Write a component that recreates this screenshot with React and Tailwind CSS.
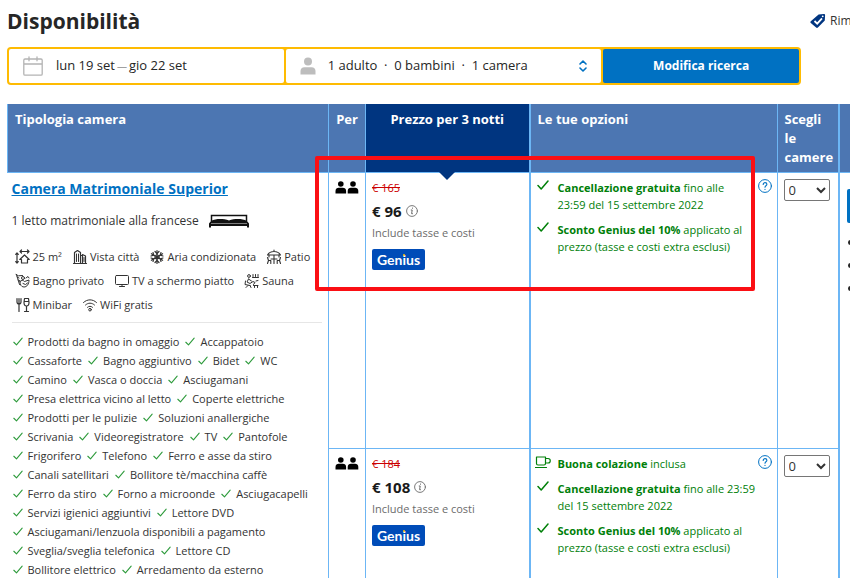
import { Fragment } from "react";

const highlights = [
  [
    { icon: SizeIcon, label: "25 m²" },
    { icon: CityIcon, label: "Vista città" },
    { icon: SnowIcon, label: "Aria condizionata" },
    { icon: PatioIcon, label: "Patio" },
  ],
  [
    { icon: ShowerIcon, label: "Bagno privato" },
    { icon: TvIcon, label: "TV a schermo piatto" },
    { icon: SaunaIcon, label: "Sauna" },
  ],
  [
    { icon: MinibarIcon, label: "Minibar" },
    { icon: WifiIcon, label: "WiFi gratis" },
  ],
];

const facilities = [
  ["Prodotti da bagno in omaggio", "Accappatoio"],
  ["Cassaforte", "Bagno aggiuntivo", "Bidet", "WC"],
  ["Camino", "Vasca o doccia", "Asciugamani"],
  ["Presa elettrica vicino al letto", "Coperte elettriche"],
  ["Prodotti per le pulizie", "Soluzioni anallergiche"],
  ["Scrivania", "Videoregistratore", "TV", "Pantofole"],
  ["Frigorifero", "Telefono", "Ferro e asse da stiro"],
  ["Canali satellitari", "Bollitore tè/macchina caffè"],
  ["Ferro da stiro", "Forno a microonde", "Asciugacapelli"],
  ["Servizi igienici aggiuntivi", "Lettore DVD"],
  ["Asciugamani/lenzuola disponibili a pagamento"],
  ["Sveglia/sveglia telefonica", "Lettore CD"],
  ["Bollitore elettrico", "Arredamento da esterno"],
];

const genius = { bold: "Sconto Genius del 10%", lines: ["applicato al", "prezzo (tasse e costi extra esclusi)"] };

const offers = [
  {
    id: "offer-1",
    oldPrice: "€ 165",
    price: "€ 96",
    options: [
      { bold: "Cancellazione gratuita", lines: ["fino alle", "23:59 del 15 settembre 2022"] },
      genius,
    ],
  },
  {
    id: "offer-2",
    oldPrice: "€ 184",
    price: "€ 108",
    options: [
      { bold: "Buona colazione", lines: ["inclusa"], breakfast: true },
      { bold: "Cancellazione gratuita", lines: ["fino alle 23:59", "del 15 settembre 2022"] },
      genius,
    ],
  },
];

function Icon({ children, className = "size-4", viewBox = "0 0 16 16" }) {
  return (
    <svg
      viewBox={viewBox}
      className={`shrink-0 ${className}`}
      fill="none"
      stroke="currentColor"
      strokeWidth="1"
      strokeLinecap="round"
      strokeLinejoin="round"
      aria-hidden="true"
    >
      {children}
    </svg>
  );
}

function SizeIcon() {
  return (
    <Icon>
      <path d="M5 2.500h9M6.500 1 5 2.500 6.500 4M12.500 1 14 2.500 12.500 4M2 4v10M.7 5.300 2 4l1.300 1.300M.7 12.700 2 14l1.300-1.300" strokeWidth="1.200" />
      <path d="m4.800 10.500 4.700-4.500 4.700 4.500H12.500V14h-6v-3.500z" strokeWidth="1.200" />
    </Icon>
  );
}

function CityIcon() {
  return (
    <Icon>
      <path d="M2.500 14.500v-11l3-2 3 2v11zM8.500 6.500h2v8M10.500 14.500v-9l3 1.500v7.500zM1.500 14.500h13" strokeWidth="1.200" />
      <path d="M4.500 5v7.500M6.500 5v7.500M12 8.500v4" />
    </Icon>
  );
}

function SnowIcon() {
  return (
    <Icon>
      <path d="M8 1.500v13M2.400 4.700l11.200 6.600M2.400 11.300l11.200-6.600" strokeWidth="1.200" />
      <path d="m6 2.500 2 2 2-2M6 13.500l2-2 2 2M2 7l2.700-.8L4 3.500M14 9l-2.700.8.700 2.700M2 9l2.700.8-.7 2.700M14 7l-2.700-.8.7-2.700" strokeWidth="1.200" />
      <circle cx="8" cy="8" r="2.200" />
    </Icon>
  );
}

function PatioIcon() {
  return (
    <Icon>
      <path d="M8 1v1.500M1.500 6C3 3.500 5.500 2.500 8 2.500S13 3.500 14.500 6zM8 6v8.500M5 10h6" strokeWidth="1.100" />
      <path d="M3 6v2M13 6v2M1.500 8.500l1 3h2.300v3M14.500 8.500l-1 3h-2.300v3M2.500 11.500l-1 3M13.500 11.500l1 3" strokeWidth="1.100" />
    </Icon>
  );
}

function ShowerIcon() {
  return (
    <Icon>
      <path d="M1 1.500l2.500 1.300 4-.3M2 4l2 1M3 7l1.500.5M1.500 1.500l3 10" />
      <circle cx="8" cy="5" r="1.500" />
      <path d="M5 8.500c1.500-1.500 3-1.500 4.500 0l4.500-1.500c0 4-2 7-5 7s-4-2.500-4-5.500zM8 10.500l2.500 1 2-1.500M11 5l2-1.500 1 1.500" />
    </Icon>
  );
}

function TvIcon() {
  return (
    <Icon>
      <path d="M2.500 2.500h11a1 1 0 0 1 1 1v7a1 1 0 0 1-1 1h-11a1 1 0 0 1-1-1v-7a1 1 0 0 1 1-1zM8 11.500v2M5.500 13.500h5" />
    </Icon>
  );
}

function SaunaIcon() {
  return (
    <Icon>
      <circle cx="5" cy="3" r="1.400" />
      <path d="M9 1.500v2M11.500 1.500v2M14 1.500v2M8.500 4.500h6" />
      <path d="M4.500 6 3 9l3 1.500 3-2 2 1-1.500 2M4.500 6l3 2M1.500 8l-.5 3.500 5 1M2 14.500l2-2M6 12.500l1 2M9.500 12.500h4.500M10.500 14.500v-2M13.500 14.500v-2M12 8l2-.5" />
    </Icon>
  );
}

function MinibarIcon() {
  return (
    <Icon>
      <path d="M2 1.500v3.500M4 1.500v13M6 1.500v3.500M2 5c0 1.300.8 2 2 2s2-.7 2-2" strokeWidth="1.200" />
      <path d="M9.500 1.500h4l.5 4c0 2-1 3.500-2.500 3.500S9 7.500 9 5.500zM9.200 4.500h4.600M11.500 9v5M9.500 14.500h4" strokeWidth="1.200" />
    </Icon>
  );
}

function WifiIcon() {
  return (
    <Icon>
      <path d="M1.500 5.500c3.800-3.600 9.200-3.600 13 0M3.500 8c2.700-2.500 6.300-2.500 9 0M5.500 10.300c1.600-1.400 3.400-1.400 5 0" />
      <circle cx="8" cy="12.700" r="1.300" />
    </Icon>
  );
}

function CheckIcon({ className }) {
  return (
    <Icon viewBox="0 0 12 12" className={className}>
      <path d="M1 7.500l3.200 3.200L11 2.500" strokeWidth="1.300" />
    </Icon>
  );
}

function BoldCheckIcon() {
  return (
    <Icon viewBox="0 0 12 12" className="size-3 mx-0.5">
      <path d="M1 6.500l3.200 3.500L11 2" strokeWidth="1.500" />
    </Icon>
  );
}

function CupIcon() {
  return (
    <Icon className="size-4">
      <path d="M1.500 2h9v6.500a1.500 1.500 0 0 1-1.500 1.500H3a1.500 1.500 0 0 1-1.500-1.500zM10.500 3.500h2.500a1.800 1.800 0 0 1 0 4.500h-2.500M.5 12.500h11" strokeWidth="1.200" />
    </Icon>
  );
}

function BedIcon() {
  return (
    <svg viewBox="0 0 40 14" className="w-10 h-3.5 shrink-0" aria-hidden="true">
      <path d="M2.500 7V1.500h35V7" fill="none" stroke="#111" strokeWidth="1.500" />
      <path d="M2 7C7 4.500 14 4.500 20 6.500 26 4.500 33 4.500 38 7l2 2.500v4h-2V12H2v1.500H0v-4z" fill="#111" />
      <path d="M2 9.500h36" stroke="#999" strokeWidth=".8" />
    </svg>
  );
}

function GuestsIcon() {
  return (
    <svg viewBox="0 0 23 13" className="w-6 h-[13px]" fill="#000" role="img" aria-label="2 ospiti">
      <circle cx="5.300" cy="3" r="2.800" />
      <path d="M0 12.500v-2.500C0 8 1.500 6.800 3.200 6.800h4.200c1.700 0 3.200 1.200 3.200 3.200v2.500z" />
      <circle cx="17.500" cy="3" r="2.800" />
      <path d="M12.200 12.500v-2.500c0-2 1.500-3.200 3.200-3.200h4.200c1.700 0 3.200 1.200 3.200 3.200v2.500z" />
    </svg>
  );
}

function InfoIcon() {
  return (
    <Icon viewBox="0 0 12 12" className="size-3 text-[#6b6b6b]">
      <circle cx="6" cy="6" r="5.400" strokeWidth=".9" />
      <path d="M5.200 5h1L5.600 8.700h.9M6.500 3v.3" strokeWidth="1" />
    </Icon>
  );
}

function HelpIcon() {
  return (
    <Icon viewBox="0 0 14 14" className="size-3.5">
      <circle cx="7" cy="7" r="6.400" />
      <path d="M5.200 5.400c0-2.400 3.700-2.300 3.700-.1C8.900 6.800 7 6.800 7 8.300M7 10.200v.2" strokeWidth="1.100" />
    </Icon>
  );
}

function SearchBar() {
  return (
    <form
      className="mt-2.5 mr-[49px] grid grid-cols-[275fr_316fr_196fr] gap-0.5 rounded-sm bg-[#febb02] p-0.5 text-[13px] font-medium text-[#262626]"
      onSubmit={(e) => e.preventDefault()}
    >
      <button type="button" className="flex h-[34px] items-center rounded-xs bg-white pl-3.5 text-left">
        <Icon viewBox="0 0 20 20" className="size-5 text-[#b4b4b4]">
          <path d="M2 3h16a1.200 1.200 0 0 1 1.200 1.200V18a1.200 1.200 0 0 1-1.200 1.200H2A1.200 1.200 0 0 1 .8 18V4.200A1.200 1.200 0 0 1 2 3zM.8 8h18.400M6 .8v4M14 .8v4" strokeWidth="1.300" />
        </Icon>
        <span className="ml-[13px] flex items-center gap-0.5">
          lun 19 set <span className="text-[10px] text-[#a0a0a0]">—</span> gio 22 set
        </span>
      </button>
      <button type="button" className="flex h-[34px] items-center rounded-xs bg-white pr-3.5 pl-3.5 text-left">
        <svg viewBox="0 0 16 18" className="h-[18px] w-4 shrink-0" fill="#bdbdbd" aria-hidden="true">
          <circle cx="8" cy="4.500" r="4" />
          <path d="M.5 17.500V14c0-2.200 1.600-3.800 3.800-3.800h7.400c2.200 0 3.800 1.600 3.800 3.800v3.500z" />
        </svg>
        <span className="ml-3 grow whitespace-pre">1 adulto  ·  0 bambini  ·  1 camera</span>
        <Icon viewBox="0 0 8 12" className="h-3 w-2 text-[#0071c2]">
          <path d="M1 4l3-3 3 3M1 8l3 3 3-3" strokeWidth="1.600" />
        </Icon>
      </button>
      <button type="submit" className="rounded-xs bg-[#0071c2] text-center text-[12px] font-bold text-white">
        Modifica ricerca
      </button>
    </form>
  );
}

function RoomCell() {
  return (
    <td rowSpan={2} className="border border-[#6cb6f5] border-b-0 border-l-0 pt-1 pr-1.5 pl-1 align-top">
      <a href="#camera" className="block text-[14px] leading-6 font-bold text-[#0071c2] underline">
        Camera Matrimoniale Superior
      </a>
      <p className="mt-2.5 flex items-center gap-2.5 text-[12px] leading-5">
        1 letto matrimoniale alla francese
        <BedIcon />
      </p>
      <ul className="mt-3.5 pl-[3px] text-[11px] leading-6">
        {highlights.map((row) => (
          <li key={row[0].label} className="flex gap-2.5 whitespace-nowrap">
            {row.map(({ icon: HighlightIcon, label }) => (
              <span key={label} className="flex items-center gap-0.5">
                <HighlightIcon />
                {label}
              </span>
            ))}
          </li>
        ))}
      </ul>
      <hr className="mt-[5px] border-[#e6e6e6]" />
      <ul className="mt-[9px] pl-px text-[11px] leading-[19px]">
        {facilities.map((row) => (
          <li key={row[0]} className="flex gap-1.5 whitespace-nowrap">
            {row.map((label) => (
              <span key={label} className="flex items-center gap-[5px]">
                <CheckIcon className="size-2.5 text-[#2e9b3c]" />
                {label}
              </span>
            ))}
          </li>
        ))}
      </ul>
    </td>
  );
}

function GeniusBadge() {
  return (
    <span className="inline-block rounded-xs bg-[#004cb8] px-[5px] font-['Lato',sans-serif] text-[14px] leading-[21px] font-bold text-white">
      Gen
      <span className="relative">
        i<span className="absolute top-[3px] left-px size-0.5 rounded-full bg-[#febb02]" />
      </span>
      us
    </span>
  );
}

function Offer({ offer }) {
  return (
    <>
      <td className="border border-[#6cb6f5] px-1.5 pt-2 align-top">
        <GuestsIcon />
      </td>
      <td className="border border-r-2 border-[#6cb6f5] pt-[7px] pl-1.5 align-top">
        <p className="text-[11px] leading-4 text-[#cc0000] line-through">{offer.oldPrice}</p>
        <p className="mt-[3px] flex items-center gap-1 text-[15px] leading-6 font-bold text-[#1a1a1a]">
          {offer.price}
          <InfoIcon />
        </p>
        <p className="mt-0.5 mb-1.5 text-[11px] leading-4 text-[#6b6b6b]">Include tasse e costi</p>
        <GeniusBadge />
      </td>
      <td className="border border-[#6cb6f5] pt-1.5 pr-[5px] pl-1 align-top">
        <div className="flex items-start justify-between">
          <ul className="space-y-2 text-[11px] leading-[17px] whitespace-nowrap text-[#008009]">
            {offer.options.map((option) => (
              <li key={option.bold} className="flex items-start gap-[7px]">
                {option.breakfast ? <CupIcon /> : <BoldCheckIcon />}
                <span>
                  <b>{option.bold}</b>{" "}
                  {option.lines.map((line, i) => (
                    <Fragment key={line}>
                      {i > 0 && <br />}
                      {line}
                    </Fragment>
                  ))}
                </span>
              </li>
            ))}
          </ul>
          <button type="button" aria-label="Maggiori informazioni" className="text-[#0071c2]">
            <HelpIcon />
          </button>
        </div>
      </td>
      <td className="border border-r-2 border-[#6cb6f5] px-1.5 pt-1.5 align-top">
        <select
          id={offer.id}
          aria-label="Scegli le camere"
          className="block h-[22px] w-[46px] rounded-xs border border-[#767676] bg-white text-[13px]"
        >
          <option>0</option>
          <option>1</option>
          <option>2</option>
        </select>
      </td>
    </>
  );
}

export default function App() {
  return (
    <div className="h-screen overflow-hidden bg-white pl-[7px] font-['Open_Sans','Noto_Sans',sans-serif] text-[#333]">
      <header className="flex items-center justify-between pt-[5px]">
        <h1 className="text-[21px] leading-8 font-bold text-[#262626]">Disponibilità</h1>
        <p className="flex w-10 shrink-0 items-center gap-1 text-[12px] leading-7">
          <svg viewBox="0 0 16 16" className="size-4 shrink-0" aria-hidden="true">
            <path d="M.8 8.200 8.600 1.400l5.200-.4c.9 0 1.300.5 1.300 1.300l-.3 5.300-6.900 7c-.6.600-1.200.6-1.800 0L.8 10c-.6-.6-.6-1.200 0-1.800z" fill="#003580" />
            <path d="M4.500 8l2.700 2.700L12 5.300" fill="none" stroke="#fff" strokeWidth="1.800" />
            <circle cx="12.700" cy="3.300" r=".9" fill="#fff" />
          </svg>
          Rim
        </p>
      </header>

      <SearchBar />

      <div className="relative mt-[19px]">
        <table className="w-full table-fixed border-collapse">
          <colgroup>
            <col className="w-[321px]" />
            <col className="w-[37px]" />
            <col className="w-[164px]" />
            <col />
            <col className="w-[62px]" />
            <col className="w-[11px]" />
          </colgroup>
          <thead>
            <tr className="h-[68px] bg-[#4c76b2] text-left align-top text-[13px] leading-[19px] text-white">
              <th className="border-x border-b border-[#6cb6f5] px-[7px] pt-1.5">Tipologia camera</th>
              <th className="border-x border-b border-[#6cb6f5] pt-1.5 text-center">Per</th>
              <th className="relative border-x border-r-2 border-b border-[#6cb6f5] bg-[#003580] pt-1.5 text-center">
                Prezzo per 3 notti
                <span className="absolute top-full left-1/2 -translate-x-1/2 border-x-8 border-t-8 border-x-transparent border-t-[#003580]" />
              </th>
              <th className="border-x border-b border-[#6cb6f5] px-[7px] pt-1.5">Le tue opzioni</th>
              <th className="border-x border-r-2 border-b border-[#6cb6f5] pt-1.5 pr-1 pb-1 pl-[7px]">Scegli le camere</th>
              <th className="border-b border-[#6cb6f5]" aria-label="Prenota" />
            </tr>
          </thead>
          <tbody>
            <tr className="h-[276px]">
              <RoomCell />
              <Offer offer={offers[0]} />
              <td rowSpan={2} className="overflow-hidden pt-4 pl-[7px] align-top">
                <button type="button" aria-label="Prenoto" className="block h-[34px] w-24 rounded-xs bg-[#0071c2]" />
                <ul className="mt-[17px] space-y-[18px] pl-px">
                  <li className="size-[5px] rounded-full bg-[#262626]" />
                  <li className="size-[5px] rounded-full bg-[#262626]" />
                  <li className="size-[5px] rounded-full bg-[#262626]" />
                </ul>
              </td>
            </tr>
            <tr className="h-[276px]">
              <Offer offer={offers[1]} />
            </tr>
          </tbody>
        </table>
        <div className="pointer-events-none absolute top-[52px] left-[308px] h-[135px] w-[440px] rounded-xs border-4 border-[#fb0f14]" />
      </div>
    </div>
  );
}
